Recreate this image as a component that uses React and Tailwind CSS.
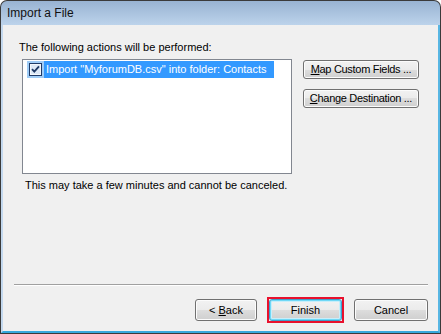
import React from "react";

const font = { fontFamily: '"Liberation Sans", Arial, sans-serif' };

function WinButton({ children, className = "", isDefault = false }) {
  return (
    <div
      className={
        "flex items-center justify-center rounded-[3px] border text-[11px] leading-none text-black bg-[linear-gradient(#f2f2f2_0%,#ebebeb_50%,#dddddd_50%,#cfcfcf_100%)] " +
        (isDefault
          ? "border-[#3f9fcb] shadow-[inset_0_0_0_1px_#6fd8f6,inset_0_0_0_2px_#c8eefa] "
          : "border-[#707070] shadow-[inset_0_0_0_1px_#fcfcfc] ") +
        className
      }
    >
      {children}
    </div>
  );
}

function CheckBox() {
  return (
    <svg width="13" height="13" viewBox="0 0 13 13">
      <rect x="0.5" y="0.5" width="12" height="12" fill="#f4f8fc" stroke="#1f3a66" />
      <rect x="2" y="2" width="9" height="9" fill="#dce8f6" />
      <path d="M3 6.2 L5.3 8.6 L10 3.3" fill="none" stroke="#1f3a66" strokeWidth="1.8" />
    </svg>
  );
}

export default function App() {
  return (
    <div style={font} className="w-[441px] h-[334px] bg-[#3a3a3a] rounded-t-[7px] p-px flex flex-col overflow-hidden">
      <div className="h-[24px] shrink-0 rounded-t-[6px] bg-[linear-gradient(#98b3d2,#bcd3eb)] flex items-center pl-[6px]">
        <span className="text-[12px] text-[#111] leading-none">Import a File</span>
      </div>
      <div className="flex-1 flex flex-col border-l-2 border-r-2 border-b-2 border-l-[#c3d8ee] border-r-[#58b6e3] border-b-[#36a8dc] bg-[#f0f0f0]">
        <div className="pl-[16px] pt-[15px] text-[11px] leading-[15px] text-black">
          The following actions will be performed:
        </div>
        <div className="flex mt-[4px] ml-[19px]">
          <div className="w-[270px] h-[115px] border border-[#828790] bg-white pl-[4px] pt-px">
            <div className="flex items-center h-[17px]">
              <div className="h-full w-[17px] bg-[#9fccf6] flex items-center justify-center">
                <CheckBox />
              </div>
              <div className="h-full bg-[#3399ff] text-white text-[11px] leading-[17px] pl-[2px] pr-[7px] whitespace-nowrap">
                Import "MyforumDB.csv" into folder: Contacts
              </div>
            </div>
          </div>
          <div className="ml-[11px] mt-px flex flex-col gap-[10px]">
            <WinButton className="w-[116px] h-[19px] tracking-[-0.3px]">
              <span>
                <span className="underline">M</span>ap Custom Fields ...
              </span>
            </WinButton>
            <WinButton className="w-[116px] h-[19px] tracking-[-0.3px]">
              <span>
                <span className="underline">C</span>hange Destination ...
              </span>
            </WinButton>
          </div>
        </div>
        <div className="pl-[22px] mt-[4px] text-[11px] leading-[15px] text-black">
          This may take a few minutes and cannot be canceled.
        </div>
        <div className="flex-1" />
        <div className="mr-[10px] ml-[11px] h-[2px] border-t border-[#a0a0a0] border-b border-b-white" />
        <div className="flex justify-end items-center mt-[11px] mb-[8px] mr-[10px]">
          <WinButton className="w-[62px] h-[22px]">
            <span>
              &lt; <span className="underline">B</span>ack
            </span>
          </WinButton>
          <div className="ml-[10px] border-2 border-[#e8112d]">
            <WinButton isDefault className="w-[73px] h-[22px]">
              Finish
            </WinButton>
          </div>
          <WinButton className="w-[74px] h-[22px] ml-[10px]">Cancel</WinButton>
        </div>
      </div>
    </div>
  );
}
